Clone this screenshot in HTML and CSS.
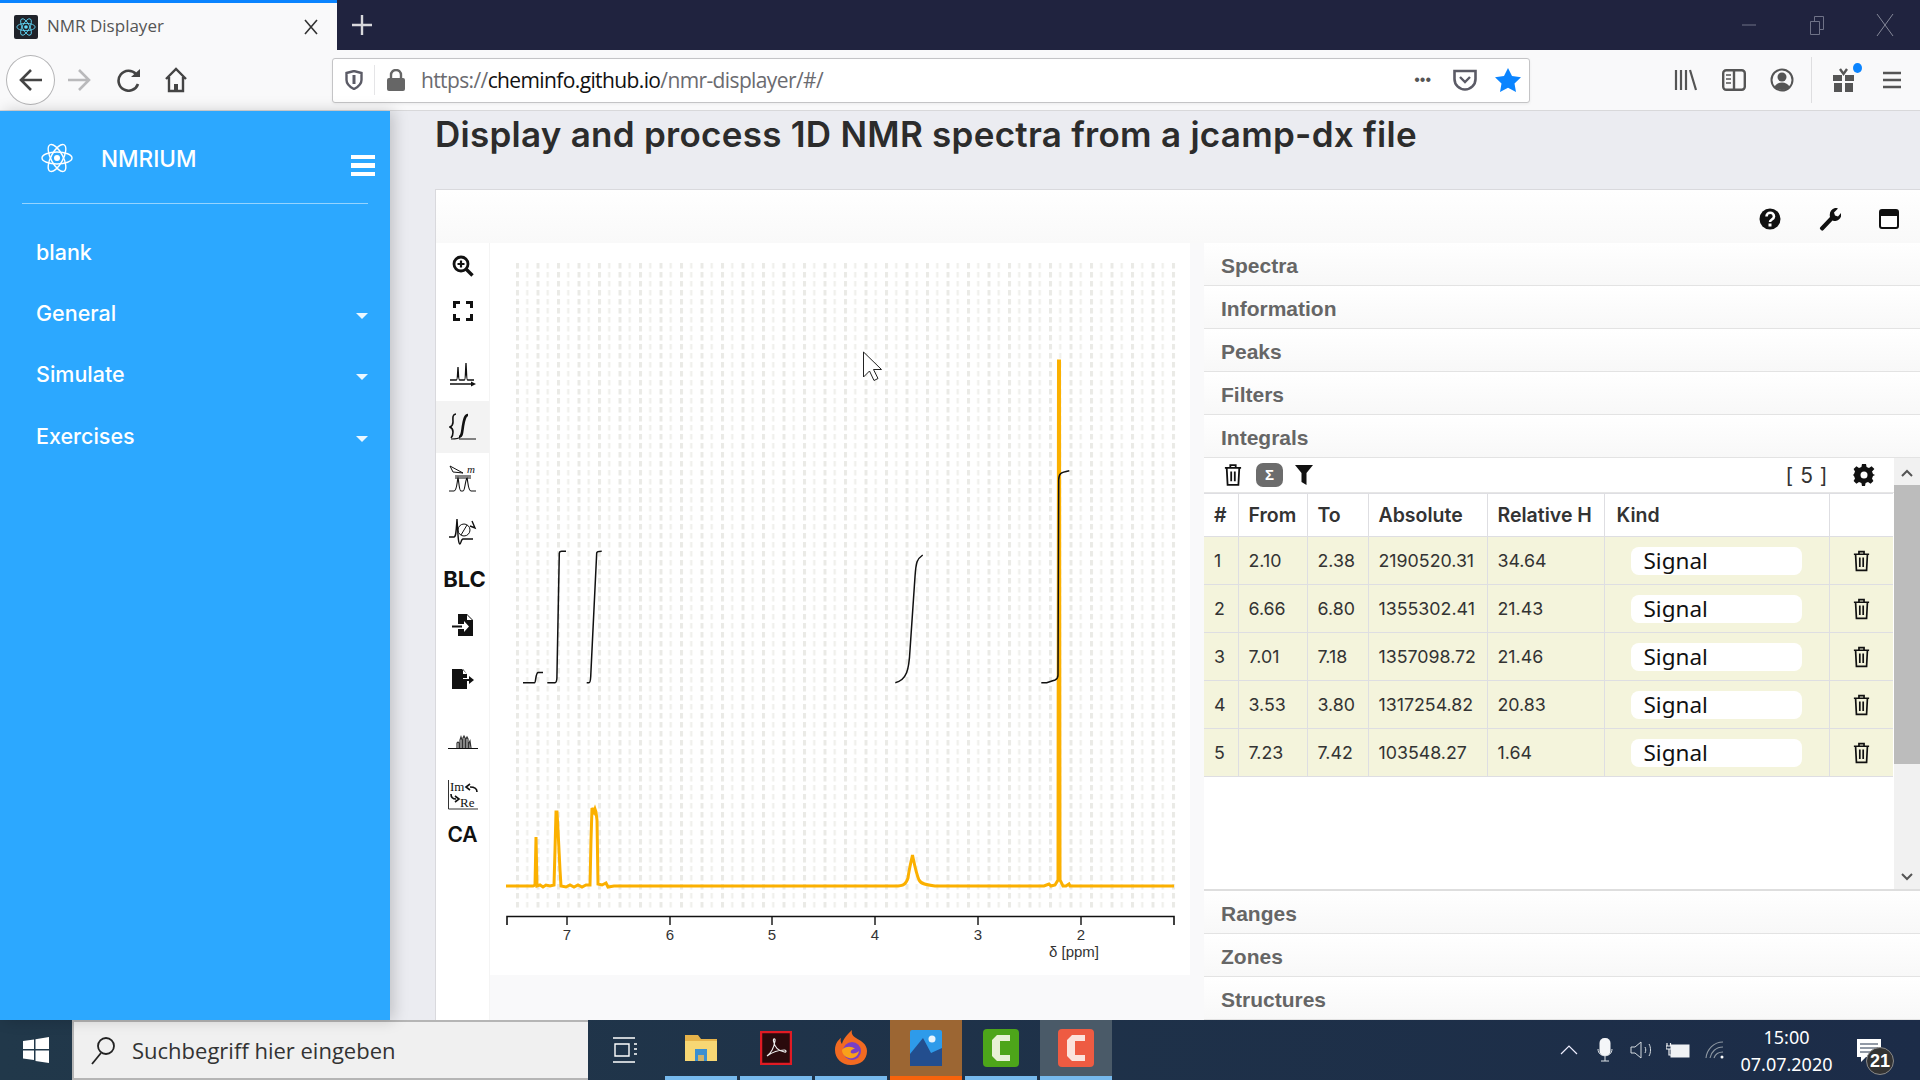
FILE: index.html
```html
<!DOCTYPE html>
<html lang="en">
<head>
  <meta charset="UTF-8" />
  <title>NMR Displayer</title>
  <link rel="stylesheet" href="styles.css">
</head>
<body>
  <svg class="defs" width="0" height="0">
    <symbol id="trash" viewBox="0 0 20 26">
      <path d="M1 5h18M7 5V2h6v3M3 5l1 19h12l1-19M8 9v11M12 9v11" fill="none" stroke="#111" stroke-width="2"/>
    </symbol>
    <symbol id="atom" viewBox="0 0 32 36">
      <g fill="none" stroke="currentColor" stroke-width="1.4">
        <ellipse cx="16" cy="18" rx="15" ry="6"/>
        <ellipse cx="16" cy="18" rx="15" ry="6" transform="rotate(62 16 18)"/>
        <ellipse cx="16" cy="18" rx="15" ry="6" transform="rotate(-62 16 18)"/>
      </g>
      <circle cx="16" cy="18" r="3" fill="currentColor"/>
    </symbol>
  </svg>

  <div class="tabbar">
    <div class="tab">
      <span class="favicon"><svg width="22" height="22"><use href="#atom"/></svg></span>
      <span class="tab-title">NMR Displayer</span>
      <svg class="tab-close" width="14" height="16" viewBox="0 0 14 16"><path d="M1 1l12 14M13 1L1 15" stroke="#333" stroke-width="1.6"/></svg>
    </div>
    <svg class="new-tab" width="20" height="20" viewBox="0 0 20 20"><path d="M10 0v20M0 10h20" stroke="#d8d8dc" stroke-width="2.4"/></svg>
    <div class="window-controls">
      <span class="win-btn"><svg width="16" height="16" viewBox="0 0 16 16"><path d="M1 8h14" stroke="#6f7287" stroke-width="1"/></svg></span>
      <span class="win-btn"><svg width="16" height="20" viewBox="0 0 16 20"><path d="M1.5 6.500h9v13h-9zM5.500 6V1.500h9v13H11" fill="none" stroke="#6f7287"/></svg></span>
      <span class="win-btn"><svg width="18" height="24" viewBox="0 0 18 24"><path d="M1 1l16 22M17 1L1 23" stroke="#858899" stroke-width="1"/></svg></span>
    </div>
  </div>

  <div class="navbar">
    <span class="nav-btn nav-back"><svg width="26" height="26" viewBox="0 0 26 26"><path d="M24 13H3M13 3L3 13l10 10" fill="none" stroke="#444" stroke-width="2.6"/></svg></span>
    <span class="nav-btn"><svg width="26" height="26" viewBox="0 0 26 26"><path d="M2 13h21M13 3l10 10-10 10" fill="none" stroke="#b9b9bb" stroke-width="2.6"/></svg></span>
    <span class="nav-btn nav-reload"><svg width="24" height="24" viewBox="0 0 24 24"><path d="M19 6a10 10 0 1 0 2 10" fill="none" stroke="#444" stroke-width="2.6"/><path d="M14 9h9V1z" fill="#444"/></svg></span>
    <span class="nav-btn nav-home"><svg width="24" height="26" viewBox="0 0 24 26"><path d="M2 12L12 2l10 10M5 10v14h14V10" fill="none" stroke="#444" stroke-width="2.4"/><path d="M10 24v-7h4v7" fill="#444"/></svg></span>
    <div class="urlbar">
      <svg class="url-shield" width="18" height="20" viewBox="0 0 18 20"><path d="M1.500 3L9 1l7.500 2v7c0 4-3.500 7-7.500 9-4-2-7.500-5-7.500-9z" fill="none" stroke="#5b5b66" stroke-width="2.4"/><path d="M9 5v9" stroke="#5b5b66" stroke-width="3"/></svg>
      <span class="url-sep"></span>
      <svg class="url-lock" width="18" height="22" viewBox="0 0 18 22"><path d="M4 10V6a5 5 0 0 1 10 0v4" fill="none" stroke="#666" stroke-width="2.4"/><rect x="0" y="9" width="18" height="13" rx="2" fill="#666"/></svg>
      <span class="url-text">https://<b>cheminfo.github.io</b>/nmr-displayer/#/</span>
      <span class="url-dots">•••</span>
      <svg class="url-pocket" width="24" height="22" viewBox="0 0 24 22"><path d="M1.500 2h21v8a10.500 10.500 0 0 1-21 0z" fill="none" stroke="#5b5b66" stroke-width="2.6"/><path d="M7 8l5 5 5-5" fill="none" stroke="#5b5b66" stroke-width="2.4"/></svg>
      <svg class="url-star" width="26" height="24" viewBox="0 0 26 24"><path d="M13 0l4 8 9 1.200-6.500 6.300L21 24l-8-4.200L5 24l1.500-8.500L0 9.200 9 8z" fill="#0a84ff"/></svg>
    </div>
    <div class="nav-right">
      <span class="nav-btn"><svg width="24" height="22" viewBox="0 0 24 22"><path d="M2 1v20M7 1v20M12 1v20M16 1l6 20" fill="none" stroke="#555" stroke-width="2.2"/></svg></span>
      <span class="nav-btn"><svg width="24" height="22" viewBox="0 0 24 22"><rect x="1.200" y="1.200" width="21.600" height="19.600" rx="3" fill="none" stroke="#555" stroke-width="2.4"/><path d="M12 1v20" stroke="#555" stroke-width="2.4"/><path d="M4 6h5M4 10h5M4 14h5" stroke="#555" stroke-width="1.6"/></svg></span>
      <span class="nav-btn"><svg width="24" height="24" viewBox="0 0 24 24"><circle cx="12" cy="12" r="10.500" fill="none" stroke="#555" stroke-width="2"/><circle cx="12" cy="9" r="4.500" fill="#555"/><path d="M4.500 19c2-6 13-6 15 0-4 4-11 4-15 0z" fill="#555"/></svg></span>
      <span class="nav-sep"></span>
      <span class="nav-btn nav-gift"><svg width="24" height="24" viewBox="0 0 24 24"><path d="M1 7h9v6H1zM13 7h9v6h-9zM2 15h8v9H2zM13 15h8v9h-8z" fill="#555"/><path d="M8 1l3.500 5L15 1" fill="none" stroke="#555" stroke-width="2.4"/></svg><i class="gift-dot"></i></span>
      <span class="nav-btn"><svg width="20" height="18" viewBox="0 0 20 18"><path d="M1 2h18M1 9h18M1 16h18" stroke="#555" stroke-width="2.6"/></svg></span>
    </div>
  </div>

  <div class="app">
    <aside class="sidebar">
      <div class="brand">
        <svg class="brand-logo" width="32" height="36"><use href="#atom"/></svg>
        <span class="brand-name">NMRIUM</span>
        <span class="burger"><i></i><i></i><i></i></span>
      </div>
      <ul class="menu">
        <li>blank</li>
        <li class="has-sub">General</li>
        <li class="has-sub">Simulate</li>
        <li class="has-sub">Exercises</li>
      </ul>
    </aside>

    <main class="main">
      <h1>Display and process 1D NMR spectra from a jcamp-dx file</h1>
      <div class="card">
        <div class="card-head">
          <svg width="22" height="22" viewBox="0 0 22 22"><circle cx="11" cy="11" r="10.500" fill="#111"/><path d="M7.500 8.500c0-5 7.500-5 7.500 0 0 3-4 3-4 5.500" fill="none" stroke="#fff" stroke-width="2.6"/><rect x="9.500" y="15.500" width="3" height="3" fill="#fff"/></svg>
          <svg width="22" height="24" viewBox="0 0 22 24"><path d="M2 23c-1.500-1-1.500-2-.5-3L11 10c-1-4 1-8 5-9 1 0 2 0 3 .5L15 5.500l1 3 3 1 3.500-4c.5 4-2 8-6 8.500-1 0-2 0-3-.5L4.500 23c-1 1-1.500 1-2.500 0z" fill="#111"/></svg>
          <svg width="20" height="20" viewBox="0 0 20 20"><rect x="1" y="1" width="18" height="18" rx="2" fill="#fff" stroke="#111" stroke-width="2"/><rect x="1" y="1" width="18" height="6" fill="#111"/></svg>
        </div>
        <div class="card-body">
          <div class="tools">
            <div class="tool tool-top"><svg width="22" height="22" viewBox="0 0 22 22"><circle cx="9" cy="9" r="7" fill="none" stroke="#111" stroke-width="2.8"/><path d="M9 5.500v7M5.500 9h7" stroke="#111" stroke-width="2.2"/><path d="M14 14l6.500 6.500" stroke="#111" stroke-width="3.4"/></svg></div>
            <div class="tool tool-top"><svg width="20" height="20" viewBox="0 0 20 20"><path d="M1.500 7V1.500H7M13 1.500h5.500V7M18.500 13v5.500H13M7 18.500H1.500V13" fill="none" stroke="#111" stroke-width="3"/></svg></div>
            <div class="tool tool-gap"><svg width="26" height="26" viewBox="0 0 26 26"><path d="M0 18h6.500c1 0 1-6 1.500-13 .5 7 .5 13 1.500 13h5c1 0 1-10 1.500-17 .5 7 .5 17 1.500 17H24M0 22h24" fill="none" stroke="#111" stroke-width="1.3"/><path d="M21 19.500l5 2.500-5 2.500z" fill="#111"/></svg></div>
            <div class="tool tool-active"><svg width="28" height="28" viewBox="0 0 28 28"><path d="M7 1C3 1 4 6 4 9c0 3-1 4-3 5 2 1 3 2 3 5 0 2 0 4-2 6" fill="none" stroke="#111" stroke-width="1.6"/><path d="M10 24c3 0 3-4 4-11 1-6 2-11 5-11" fill="none" stroke="#111" stroke-width="2.6"/><path d="M2 26c5 0 8 0 9-2M10 26h17" fill="none" stroke="#111" stroke-width="1.2"/></svg></div>
            <div class="tool"><svg width="28" height="28" viewBox="0 0 28 28"><path d="M1 1l13 7M1 1l3 6 10 1" fill="none" stroke="#111" stroke-width="1"/><path d="M6 11h16M6 13h16M0 26h5c3 0 3-10 4-13 1 3 1 13 3 13h2c2 0 2-10 4-13 1 3 1 13 4 13h5" fill="none" stroke="#111" stroke-width="1.1"/><text class="tool-m" x="18" y="8">m</text></svg></div>
            <div class="tool"><svg width="28" height="28" viewBox="0 0 28 28"><path d="M0 20h5c2 0 2-4 3-18 1 14 1 25 3 25 1 0 1-5 3-5h10" fill="none" stroke="#111" stroke-width="1.4"/><circle cx="15" cy="13" r="6" fill="none" stroke="#111" stroke-width="1"/><path d="M12 18l6-10" stroke="#111" stroke-width="1"/><path d="M23 4l3 7-5-2" fill="none" stroke="#111" stroke-width="1.4"/></svg></div>
            <div class="tool tool-text tool-blc">BLC</div>
            <div class="tool tool-file"><svg width="22" height="22" viewBox="0 0 22 22"><path d="M6 0h9l6 6v16H6v-7h6v3l5-5.500L12 7v3H6zM15 1v5h5" fill="#111"/><path d="M0 11.500h10v2H0z" fill="#111"/></svg></div>
            <div class="tool tool-file tool-file-gap"><svg width="22" height="20" viewBox="0 0 22 20"><path d="M0 0h10l5 5v4h-4v3h4v8H0zM11 0v5h4" fill="#111"/><path d="M9 10h8V7l5 4-5 4v-3H9z" fill="#111"/></svg></div>
            <div class="tool tool-gap-sm"><svg width="30" height="16" viewBox="0 0 30 16"><path d="M0 14.500h30" stroke="#111" stroke-width="1"/><path d="M9 14V9l1-1 1 1v5M12 14V6l1-3 1 3v8M15 14V4l1-2 1 2v10M18 14V5l1-2 1 2v9M21 14V9l1-2 1 7" fill="none" stroke="#333" stroke-width="1.2"/></svg></div>
            <div class="tool tool-imre"><svg width="30" height="30" viewBox="0 0 30 30"><path d="M.5 0v29H30" fill="none" stroke="#333"/><text class="imre-text" x="2" y="11">Im</text><text class="imre-text" x="12" y="27">Re</text><path d="M29 12c0-4-4-5-7-5M22 4l-4 3 4 3" fill="none" stroke="#111" stroke-width="1.6"/><path d="M3 14c0 3 2 5 5 5M7 16l4 3-4 3" fill="none" stroke="#111" stroke-width="1.6"/></svg></div>
            <div class="tool tool-text tool-ca">CA</div>
          </div>
          <div class="chart">
            <svg class="spectrum" viewBox="490 243 700 732" width="700" height="732">
              <defs>
                <pattern id="gridline" x="516" y="263" width="20.5" height="9" patternUnits="userSpaceOnUse">
                  <rect width="3" height="5.5" fill="#eaeae6"/>
                  <rect x="10.25" width="2" height="5.5" fill="#eeeeea"/>
                </pattern>
              </defs>
              <rect x="516" y="263" width="660" height="645" fill="url(#gridline)"/>
              <path class="trace" d="M506 886H530L533 886 535 885 536 837 537 886 540 885 543 887 546 885 550 886 554 885 555 850 556 812 557 812 558 830 559 850 560 870 561 886 566 887 570 885 574 887 578 885 582 887 586 885 590 885 591 840 592 808 593 810 594 812 595 809 596 812 597 820 598 884 602 885 606 883 608 887 614 886H895C904 886 906 884 908 878 909 870 911 862 912.5 855 914 862 916 873 919 880 921 884 926 885 935 886H1044L1049 884 1051 886 1055 885 1058 880 1058.5 361 1059.5 361 1060 880 1063 886 1066 886 1069 884 1070 886H1174"/>
              <g class="integral">
                <path d="M523 682.7H534.5C536 682.7 535.5 673 538 672.5H543"/>
                <path d="M547.3 682.7H555C556.5 682.7 556.7 681 556.900 678L559.3 553C559.5 551.5 560.5 551.2 561.7 551.2H566"/>
                <path d="M586.7 682.7H589C590 682.7 590.5 680 590.7 676.7L596.7 553C597 551.5 598 551.3 601.7 551.3"/>
                <path d="M895.3 682.7C906.7 680 909 670 910 650L915 576.7C916 562 917 559 922.7 555"/>
                <path d="M1041.3 682.7H1046.7L1055 680C1057 679 1058 677 1058 675L1058.7 480C1058.7 474 1060 472.5 1069.3 470.7"/>
              </g>
              <path class="axis" d="M507 925V916.5H1174V925"/>
              <path class="ticks" d="M567 916V925M670 916V925M772 916V925M875 916V925M978 916V925M1081 916V925"/>
              <g class="axis-labels">
                <text x="567" y="940">7</text>
                <text x="670" y="940">6</text>
                <text x="772" y="940">5</text>
                <text x="875" y="940">4</text>
                <text x="978" y="940">3</text>
                <text x="1081" y="940">2</text>
                <text x="1074" y="957">δ [ppm]</text>
              </g>
              <path class="cursor" d="M863.5 352v25l6-6 4.500 9.500 4-2-4.500-9h8z"/>
            </svg>
          </div>
          <div class="panel">
            <div class="panel-title">Spectra</div>
            <div class="panel-title">Information</div>
            <div class="panel-title">Peaks</div>
            <div class="panel-title">Filters</div>
            <div class="panel-title">Integrals</div>
            <div class="integrals">
              <div class="integrals-main">
                <div class="integrals-tools">
                  <svg width="18" height="24"><use href="#trash"/></svg>
                  <span class="sigma">Σ</span>
                  <svg class="filter-icon" width="18" height="20" viewBox="0 0 18 20"><path d="M0 0h18l-6.500 8v12l-5-3V8z" fill="#111"/></svg>
                  <span class="count">[ 5 ]</span>
                  <svg class="gear" width="22" height="22" viewBox="0 0 22 22"><path d="M9 0h4l.6 3 2.400 1 2.600-1.700 2.800 2.800L19 7.600l1 2.400 2 1-2 1-1 2.400 1.400 2.500-2.800 2.800-2.600-1.700-2.400 1-.6 3H9l-.6-3-2.400-1-2.600 1.700-2.800-2.800L2 14.400 1 12 0 11l1-1 1-2.400L.6 5.100l2.800-2.800L6 4l2.400-1z" fill="#111"/><circle cx="11" cy="11" r="3.5" fill="#fff"/></svg>
                </div>
                <table class="integrals-table">
                  <colgroup>
                    <col class="c-num"><col class="c-from"><col class="c-to"><col class="c-abs"><col class="c-rel"><col class="c-kind"><col class="c-del">
                  </colgroup>
                  <thead>
                    <tr><th>#</th><th>From</th><th>To</th><th>Absolute</th><th>Relative H</th><th>Kind</th><th></th></tr>
                  </thead>
                  <tbody>
                    <tr><td>1</td><td>2.10</td><td>2.38</td><td>2190520.31</td><td>34.64</td><td><span class="kind">Signal</span></td><td class="del"><svg width="17" height="22"><use href="#trash"/></svg></td></tr>
                    <tr><td>2</td><td>6.66</td><td>6.80</td><td>1355302.41</td><td>21.43</td><td><span class="kind">Signal</span></td><td class="del"><svg width="17" height="22"><use href="#trash"/></svg></td></tr>
                    <tr><td>3</td><td>7.01</td><td>7.18</td><td>1357098.72</td><td>21.46</td><td><span class="kind">Signal</span></td><td class="del"><svg width="17" height="22"><use href="#trash"/></svg></td></tr>
                    <tr><td>4</td><td>3.53</td><td>3.80</td><td>1317254.82</td><td>20.83</td><td><span class="kind">Signal</span></td><td class="del"><svg width="17" height="22"><use href="#trash"/></svg></td></tr>
                    <tr><td>5</td><td>7.23</td><td>7.42</td><td>103548.27</td><td>1.64</td><td><span class="kind">Signal</span></td><td class="del"><svg width="17" height="22"><use href="#trash"/></svg></td></tr>
                  </tbody>
                </table>
              </div>
              <div class="scrollbar">
                <svg width="14" height="9" viewBox="0 0 14 9"><path d="M2 7l5-5 5 5" fill="none" stroke="#555" stroke-width="2"/></svg>
                <div class="scroll-track"><div class="scroll-thumb"></div></div>
                <svg width="14" height="9" viewBox="0 0 14 9"><path d="M2 2l5 5 5-5" fill="none" stroke="#555" stroke-width="2"/></svg>
              </div>
            </div>
            <div class="panel-title">Ranges</div>
            <div class="panel-title">Zones</div>
            <div class="panel-title">Structures</div>
          </div>
        </div>
      </div>
    </main>
  </div>

  <footer class="taskbar">
    <span class="start"><svg width="26" height="26" viewBox="0 0 26 26"><path d="M0 4l11-1.500V12H0zM12.500 2.300L26 0v12H12.500zM0 13.500h11V23L0 21.500zM12.500 13.500H26V26l-13.500-2z" fill="#fff"/></svg></span>
    <div class="search">
      <svg width="26" height="30" viewBox="0 0 26 30"><circle cx="16" cy="11" r="8" fill="none" stroke="#222" stroke-width="1.8"/><path d="M11 18L2 29" stroke="#222" stroke-width="1.8"/></svg>
      <span>Suchbegriff hier eingeben</span>
    </div>
    <div class="task-apps">
      <span class="task"><svg width="26" height="26" viewBox="0 0 26 26"><path d="M0 1h22M0 25h22M2 7h14v12H2zM21 7h3M21 12h3M21 17h3" fill="none" stroke="#fff" stroke-width="1.4"/></svg></span>
      <span class="task task-open"><svg width="32" height="32" viewBox="0 0 32 32"><path d="M0 3h13l3 4h16v5H0z" fill="#e6b34a"/><path d="M0 9h32v20H0z" fill="#f7d774"/><path d="M10 17h12v12H10z" fill="#3a8fd1"/><path d="M13 23h6v6h-6z" fill="#cdb26c"/></svg></span>
      <span class="task task-open"><svg width="32" height="34" viewBox="0 0 32 34"><rect x="1" y="1" width="30" height="32" fill="#2a0a0c" stroke="#e01b24" stroke-width="2.5"/><path d="M7 25c4-3 7-9 8-15 .5-3-2-3-1.500 0 1 6 5 10 11 11 2 .5 2-2 0-2-6 0-12 2-17.500 6z" fill="none" stroke="#eee" stroke-width="1.2"/></svg></span>
      <span class="task task-open"><svg width="34" height="38" viewBox="0 0 34 36"><path d="M17 35C7 35 1 28 1 20 1 14 4 10 7 8c-1 3 0 5 1 6 1-5 5-9 10-14-1 4 1 6 4 8 5 3 11 6 11 13 0 9-7 14-16 14z" fill="#f26a21"/><circle cx="18" cy="21" r="9" fill="#7a3fc4"/><path d="M8 20c3-4 10-4 13-1-3 0-5 2-4 4 2 1 6 0 8-2-1 6-6 8-10 7-4-1-7-4-7-8z" fill="#f9a11b"/></svg></span>
      <span class="task task-active"><svg width="32" height="36" viewBox="0 0 32 36"><rect width="32" height="36" rx="2" fill="#2e9bea"/><circle cx="22" cy="9" r="3.5" fill="#e8f4fc"/><path d="M0 36V24L13 8l8 15 11-5v18z" fill="#234e8e"/></svg></span>
      <span class="task task-open"><svg width="36" height="38" viewBox="0 0 36 38"><rect width="36" height="38" rx="4" fill="#4da51a"/><path d="M27 6H14l-5 5v16l5 5h13v-6H17V12h10z" fill="#e7f1d5"/></svg></span>
      <span class="task task-running"><svg width="36" height="38" viewBox="0 0 36 38"><rect width="36" height="38" rx="4" fill="#ee5b42"/><path d="M27 6H14l-5 5v16l5 5h13v-6H17V12h10z" fill="#fbe3dc"/></svg></span>
    </div>
    <div class="tray">
      <span class="tray-item"><svg width="18" height="10" viewBox="0 0 18 10"><path d="M1 9l8-8 8 8" fill="none" stroke="#eef" stroke-width="1.2"/></svg></span>
      <span class="tray-item"><svg width="16" height="24" viewBox="0 0 16 24"><rect x="2.500" y="0" width="11" height="18" rx="5" fill="#f4f6f8"/><path d="M1 11c0 9 14 9 14 0M8 18v5M4 23h8" fill="none" stroke="#dfe4e8" stroke-width="1"/></svg></span>
      <span class="tray-item"><svg width="24" height="18" viewBox="0 0 24 18"><path d="M1 6h4l6-5v16l-6-5H1zM15 6c1 2 1 4 0 6M19 3c2 3 2 9 0 12" fill="none" stroke="#d5dbe0" stroke-width="1"/></svg></span>
      <span class="tray-item"><svg width="24" height="16" viewBox="0 0 24 16"><rect x="5" y="3" width="18" height="12" fill="#f0f2f4" stroke="#f0f2f4"/><path d="M1 1v3M4.500 1v3M0 4h6v3H0zM3 7v6h3" fill="none" stroke="#f0f2f4" stroke-width="1.2"/></svg></span>
      <span class="tray-item"><svg width="20" height="18" viewBox="0 0 20 18"><path d="M1 17C2 8 9 1 18 1M5 17c1-6 6-11 13-11M9 17c1-3 4-6 9-6" fill="none" stroke="#8f99a3" stroke-width="1.1"/><circle cx="17" cy="16" r="1.5" fill="#fff"/></svg></span>
      <div class="clock"><span>15:00</span><span>07.07.2020</span></div>
      <div class="notif">
        <svg width="24" height="23" viewBox="0 0 24 23"><path d="M0 0h24v18h-15l-5 5v-5H0z" fill="#fff"/><path d="M3 5h18M3 9h18M3 13h12" stroke="#25344d" stroke-width="1"/></svg>
        <span class="notif-badge">21</span>
      </div>
    </div>
  </footer>
</body>
</html>
```

FILE: styles.css
```css
* {
  box-sizing: border-box;
}
html, body {
  height: 100%;
}
body {
  margin: 0;
  width: 1920px;
  height: 1080px;
  overflow: hidden;
  display: flex;
  flex-direction: column;
  font-family: Inter, "Liberation Sans", sans-serif;
  color: #333;
  background: #ebecf1;
}
.defs {
  position: absolute;
}

/* browser chrome */
.tabbar {
  height: 50px;
  flex: none;
  display: flex;
  align-items: center;
  background: #20233f;
}
.tab {
  width: 337px;
  height: 50px;
  display: flex;
  align-items: center;
  padding-left: 14px;
  background: #f9f9fa;
  border-top: 3px solid #0a84ff;
}
.favicon {
  width: 24px;
  height: 24px;
  display: flex;
  align-items: center;
  justify-content: center;
  background: #20232a;
  border-radius: 2px;
  color: #61dafb;
}
.tab-title {
  margin-left: 9px;
  margin-top: -2px;
  font: 17px "Open Sans", sans-serif;
  color: #555;
  flex: 1;
}
.tab-close {
  margin-right: 19px;
}
.new-tab {
  margin-left: 15px;
}
.window-controls {
  margin-left: auto;
  display: flex;
  padding-right: 1px;
}
.win-btn {
  width: 68px;
  height: 50px;
  display: flex;
  align-items: center;
  justify-content: center;
}
.navbar {
  height: 61px;
  flex: none;
  display: flex;
  align-items: center;
  padding-left: 6px;
  background: #f9f9fa;
  border-bottom: 1px solid #d8d8da;
}
.nav-btn {
  width: 48px;
  height: 48px;
  display: flex;
  align-items: center;
  justify-content: center;
  position: relative;
}
.nav-back {
  width: 49px;
  height: 50px;
  background: #fff;
  border: 1px solid #b4b4b6;
  border-radius: 50%;
}
.nav-reload {
  margin-left: 2px;
}
.nav-home {
  margin-left: -1px;
}
.urlbar {
  width: 1198px;
  height: 45px;
  margin-left: 132px;
  display: flex;
  align-items: center;
  background: #fff;
  border: 1px solid #c4c4c6;
  border-radius: 3px;
  box-shadow: 0 1px 3px rgba(0,0,0,0.06);
}
.url-shield {
  margin-left: 12px;
}
.url-sep {
  width: 1px;
  height: 30px;
  margin-left: 11px;
  background: #e5e5e7;
}
.url-lock {
  margin-left: 12px;
}
.url-text {
  margin-left: 16px;
  font: 21px "Open Sans", sans-serif;
  letter-spacing: -0.62px;
  color: #6b6b70;
}
.url-text b {
  font-weight: 400;
  color: #111;
}
.url-dots {
  margin-left: auto;
  font: 16px "Liberation Sans", sans-serif;
  color: #555;
}
.url-pocket {
  margin-left: 22px;
}
.url-star {
  margin-left: 18px;
  margin-right: 8px;
}
.nav-right {
  margin-left: auto;
  display: flex;
  align-items: center;
  padding-right: 4px;
}
.nav-sep {
  width: 1px;
  height: 46px;
  margin: 0 8px 0 5px;
  background: #dedee0;
}
.gift-dot {
  position: absolute;
  top: 7px;
  right: 6px;
  width: 9px;
  height: 10px;
  border-radius: 50%;
  background: #0a84ff;
}

/* app */
.app {
  flex: 1;
  min-height: 0;
  display: flex;
}
.sidebar {
  width: 390px;
  flex: none;
  background: #2ca8ff;
  color: #fff;
  box-shadow: 4px 0 14px rgba(0,0,0,0.18);
  z-index: 1;
}
.brand {
  height: 93px;
  margin: 0 22px;
  padding-top: 2px;
  display: flex;
  align-items: center;
  border-bottom: 1px solid rgba(255,255,255,0.5);
}
.brand-logo {
  margin-left: 19px;
}
.brand-name {
  margin-left: 28px;
  font-size: 22.5px;
  font-weight: 500;
}
.burger {
  margin-left: auto;
  width: 24px;
  margin-right: -7px;
  display: flex;
  flex-direction: column;
  gap: 4px;
  margin-top: 15px;
}
.burger i {
  height: 4.5px;
  background: #fff;
}
.menu {
  list-style: none;
  margin: 18px 0 0;
  padding: 0 22px 0 36px;
  font-size: 21.5px;
  font-weight: 500;
}
.menu li {
  height: 61.2px;
  line-height: 61.2px;
  position: relative;
}
.has-sub::after {
  content: "";
  position: absolute;
  right: 0;
  top: 30px;
  border: 6px solid transparent;
  border-top-color: rgba(255,255,255,0.9);
  border-bottom: 0;
}
.main {
  flex: 1;
  min-width: 0;
  padding-left: 45px;
}
.main h1 {
  margin: 0 0 32px;
  font-size: 35px;
  letter-spacing: 0.27px;
  line-height: 46px;
  font-weight: 600;
  color: #2c2c2c;
  white-space: nowrap;
}
.card {
  height: 831px;
  background: #fff;
  border: 1px solid #d9d9dd;
  border-right: 0;
  border-bottom: 0;
  overflow: hidden;
}
.card-head {
  height: 53px;
  display: flex;
  align-items: center;
  justify-content: flex-end;
  gap: 38px;
  padding: 0 21px 0 0;
  background: linear-gradient(#fff, #f9f9f9);
}
.card-head svg {
  margin-top: 5px;
}
.card-body {
  height: 777px;
  display: flex;
  background: #f9f9fa;
}
.tools {
  width: 54px;
  flex: none;
  background: #fff;
  border-right: 1px solid #f4f4f4;
}
.tool {
  height: 52px;
  display: flex;
  align-items: center;
  justify-content: center;
}
.tool-top {
  height: 45px;
}
.tool-gap {
  margin-top: 16px;
}
.tool-gap-sm {
  margin-top: 13px;
}
.tool-active {
  background: #f3f3f3;
}
.tool-text {
  font-weight: 700;
  color: #111;
}
.tool-blc {
  height: 44px;
  padding-left: 4px;
  font-size: 22px;
}
.tool-ca {
  height: 24px;
  font-size: 21px;
  font-weight: 600;
}
.tool-file {
  height: 48px;
}
.tool-file-gap {
  margin-top: 6px;
}
.tool-imre {
  height: 54px;
}
.tool-m {
  font: italic 11px "Liberation Serif", serif;
  fill: #111;
}
.imre-text {
  font: 13px "Liberation Serif", serif;
  fill: #111;
}
.chart {
  width: 700px;
  height: 732px;
  flex: none;
  background: #fff;
}
.spectrum {
  display: block;
}
.trace {
  fill: none;
  stroke: #fbb000;
  stroke-width: 3;
}
.integral path {
  fill: none;
  stroke: #111;
  stroke-width: 1.5;
}
.axis {
  fill: none;
  stroke: #111;
  stroke-width: 1.6;
}
.ticks {
  stroke: #111;
  stroke-width: 1.4;
}
.axis-labels text {
  font: 15px "Liberation Sans", sans-serif;
  fill: #333;
  text-anchor: middle;
}
.cursor {
  fill: #fff;
  stroke: #222;
  stroke-width: 1;
}

/* side panel */
.panel {
  width: 716px;
  flex: none;
  margin-left: 14px;
  background: #fff;
}
.panel-title {
  height: 43px;
  padding-left: 17px;
  font: bold 21px/46px "Liberation Sans", sans-serif;
  color: #666;
  background: linear-gradient(#fff, #f8f8f8);
  border-bottom: 1px solid #e3e3e3;
}
.integrals {
  height: 433px;
  display: flex;
  background: #fff;
  border-bottom: 2px solid #dedede;
}
.integrals-main {
  width: 690px;
  flex: none;
}
.integrals-tools {
  height: 35px;
  display: flex;
  align-items: center;
  padding-left: 20px;
  border-bottom: 1px solid #e6e6e6;
}
.sigma {
  width: 27px;
  height: 24px;
  margin-left: 14px;
  border-radius: 7px;
  background: #6c6c6c;
  color: #fff;
  font: bold 15px/24px "Liberation Sans", sans-serif;
  text-align: center;
}
.filter-icon {
  margin-left: 12px;
}
.count {
  margin-left: auto;
  font-size: 21px;
  color: #333;
  letter-spacing: 0.5px;
}
.gear {
  margin-left: 25px;
  margin-right: 19px;
}
.integrals-table {
  width: 689px;
  border-collapse: collapse;
  table-layout: fixed;
  font-size: 17.8px;
  color: #333;
}
.c-num { width: 34px; }
.c-from { width: 69px; }
.c-to { width: 61px; }
.c-abs { width: 119px; }
.c-rel { width: 117px; }
.c-kind { width: 225px; }
.c-del { width: 64px; }
.integrals-table th,
.integrals-table td {
  border: 1px solid #dedee2;
  padding: 0 0 0 10px;
  text-align: left;
  white-space: nowrap;
}
.integrals-table th {
  height: 43px;
  font-size: 19.5px;
  font-weight: 600;
  background: #fff;
}
.integrals-table th:nth-child(6) {
  padding-left: 12px;
}
.integrals-table td {
  height: 48px;
  background: #f4f4dc;
}
.integrals-table th:first-child,
.integrals-table td:first-child {
  padding-left: 10px;
  border-left: 0;
}
.integrals-table th:last-child,
.integrals-table td:last-child {
  border-right: 0;
}
.kind {
  display: block;
  width: 171px;
  height: 28px;
  margin-left: 16px;
  padding-left: 13px;
  background: #fff;
  border-radius: 8px;
  font: 22.5px/28px "Noto Sans", sans-serif;
  color: #111;
}
.integrals-table td.del {
  padding: 4px 0 0;
  text-align: center;
}
.scrollbar {
  width: 26px;
  flex: none;
  display: flex;
  flex-direction: column;
  align-items: center;
  padding: 11px 0 8px;
  background: #f1f1f1;
}
.scroll-track {
  flex: 1;
  width: 100%;
  padding-top: 7px;
}
.scroll-thumb {
  height: 279px;
  background: #bcbcbc;
}

/* taskbar */
.taskbar {
  height: 60px;
  flex: none;
  display: flex;
  background: linear-gradient(90deg, #21384a, #1c2c48);
  color: #fff;
}
.start {
  width: 72px;
  display: flex;
  align-items: center;
  justify-content: center;
}
.search {
  width: 516px;
  display: flex;
  align-items: center;
  gap: 16px;
  padding-left: 16px;
  background: #f0f0f0;
  border: 2px solid #b5b5b5;
  border-right: 0;
  font: 22px "Open Sans", sans-serif;
  color: #333;
}
.task-apps {
  display: flex;
  gap: 3px;
  padding-left: 2px;
}
.task {
  width: 72px;
  display: flex;
  align-items: center;
  justify-content: center;
}
.task-open {
  border-bottom: 4px solid #76b9ed;
}
.task-active {
  background: #9c6633;
  border-bottom: 4px solid #f7630c;
}
.task-running {
  background: #4a5a68;
  border-bottom: 4px solid #76b9ed;
}
.tray {
  margin-left: auto;
  display: flex;
  padding-right: 8px;
}
.tray-item {
  width: 36.5px;
  display: flex;
  align-items: center;
  justify-content: center;
}
.clock {
  width: 107px;
  display: flex;
  flex-direction: column;
  justify-content: center;
  gap: 3px;
  text-align: center;
  font: 18px/24px "Noto Sans", sans-serif;
}
.notif {
  width: 72px;
  position: relative;
  display: flex;
  align-items: center;
  justify-content: center;
  padding-right: 14px;
}
.notif-badge {
  position: absolute;
  left: 26px;
  top: 27px;
  width: 28px;
  height: 28px;
  border-radius: 50%;
  border: 1px solid #8a8a8a;
  background: #333;
  font: bold 18px/26px "Liberation Sans", sans-serif;
  text-align: center;
}
```
